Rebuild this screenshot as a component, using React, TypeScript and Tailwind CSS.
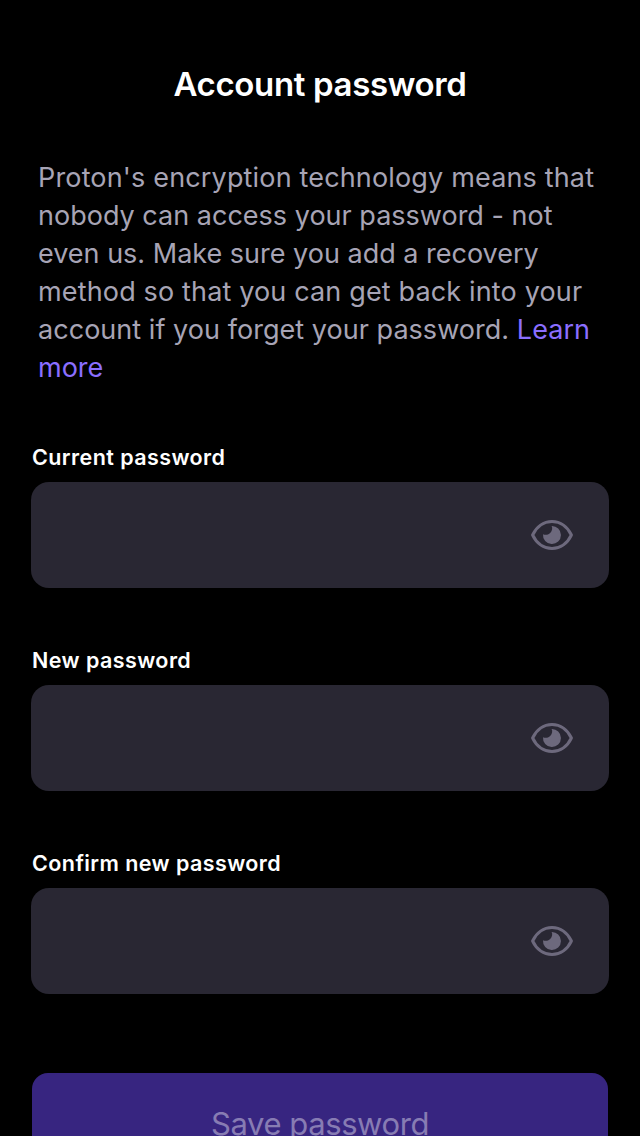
function Eye() {
  return (
    <svg viewBox="0 0 42 32" className="h-8 w-[42px] text-[#6d697d]" fill="none" aria-hidden="true">
      <path d="M1.6 16C5.4 8 12.500 2.500 21 2.500S36.600 8 40.400 16C36.600 24 29.500 29.500 21 29.500S5.400 24 1.600 16Z" stroke="currentColor" strokeWidth="3" strokeLinejoin="round" />
      <path d="M20.600 7A9 9 0 1 1 12 15.200C14 16.200 17.200 15.900 19.200 13.900C21.400 11.800 21.700 8.900 20.600 7Z" fill="currentColor" />
    </svg>
  );
}

function Field({ label }: { label: string }) {
  return (
    <div className="flex h-[203px] flex-col">
      <label className="ml-px h-[42px] pt-[2px] text-[21.5px] leading-[30px] font-semibold tracking-[0.43px] text-white">{label}</label>
      <div className="flex h-[106px] items-center justify-end rounded-[18px] bg-[#292733] pr-9">
        <Eye />
      </div>
    </div>
  );
}

export default function App() {
  return (
    <main className="h-[1136px] w-[640px] overflow-hidden bg-black font-['Inter',sans-serif]">
      <h1 className="pt-[62px] text-center text-[33px] leading-[44px] font-[560] tracking-[-0.35px] text-white">Account password</h1>
      <p className="mt-[53px] ml-[38px] text-[27px] leading-[38px] whitespace-nowrap text-[#a7a4b5]">
        <span className="block w-fit tracking-[0.16px]">Proton's encryption technology means that</span>
        <span className="block w-fit tracking-[0.01px]">nobody can access your password - not</span>
        <span className="block w-fit">even us. Make sure you add a recovery</span>
        <span className="block w-fit tracking-[0.15px]">method so that you can get back into your</span>
        <span className="block w-fit tracking-[0.04px]">account if you forget your password. <a className="text-[#8a6eff]">Learn</a></span>
        <a className="block w-fit text-[#8a6eff]">more</a>
      </p>
      <form className="mt-[53px] px-[31px]">
        <Field label="Current password" />
        <Field label="New password" />
        <Field label="Confirm new password" />
        <button type="button" className="mx-px mt-[24px] h-[102px] w-[576px] rounded-[16px] bg-[#372580] text-[31px] tracking-[-0.42px] text-[#877cb3]">Save password</button>
      </form>
    </main>
  );
}
